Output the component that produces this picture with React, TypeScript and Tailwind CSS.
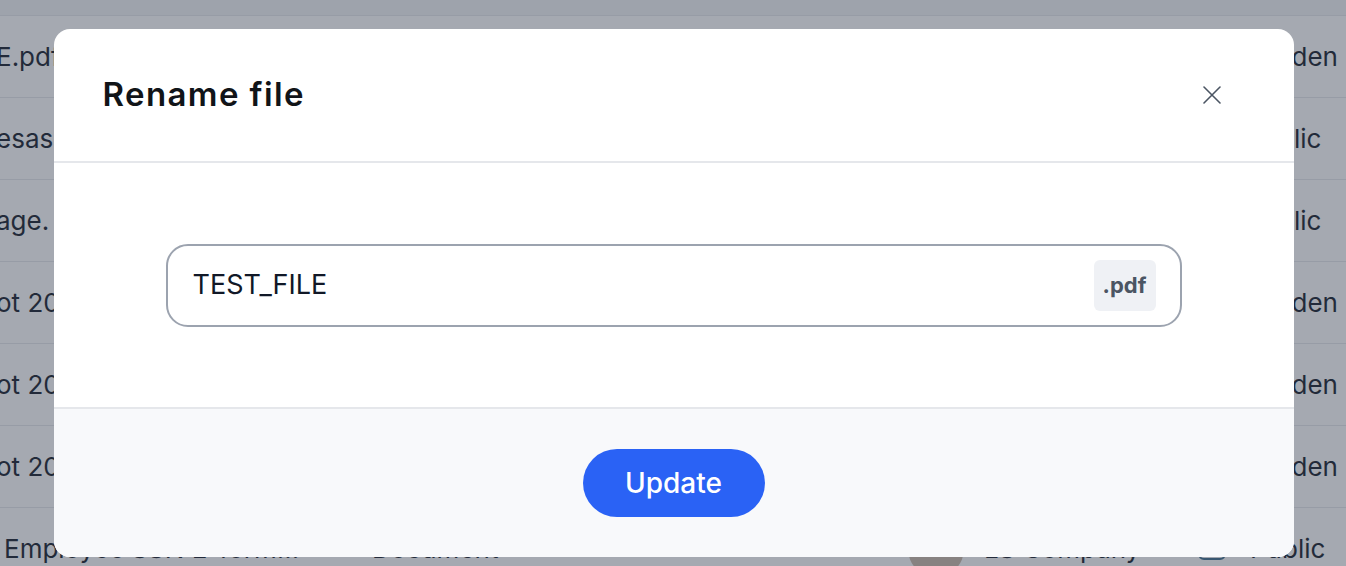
import React from "react";

const rows = [
  { name: "E.pdf", right: "Hidden", avatar: true },
  { name: "esasc", right: "Public" },
  { name: "age.", right: "Public" },
  { name: "ot 20", right: "Hidden" },
  { name: "ot 20", right: "Hidden" },
  { name: "ot 20", right: "Hidden" },
  { name: "Employee SSN E-form...", right: "Public", avatar: true, doc: "Document", company: "LS Company" },
];

export default function App() {
  return (
    <div
      className="relative h-[566px] w-[1346px] overflow-hidden bg-white"
      style={{ fontFamily: "Inter, 'Noto Sans', sans-serif" }}
    >
      {/* background table */}
      <div className="flex flex-col text-[26px] text-[#111827]">
        <div className="h-[16px] bg-gray-100 border-b border-gray-200" />
        {rows.map((r, i) => (
          <div key={i} className="flex h-[82px] items-center border-b border-gray-200">
            <div className={`w-[348px] shrink-0 whitespace-nowrap overflow-hidden ${i === 6 ? "pl-[4px]" : "-ml-[4px]"}`}>{r.name}</div>
            <div className="w-[560px] shrink-0 pl-[24px]">{r.doc ?? "Document"}</div>
            <div className="flex w-[280px] shrink-0 items-center gap-[20px]">
              <div className="h-[56px] w-[56px] rounded-full bg-[#c9b8a8]" />
              <span>{r.company ?? "LS Company"}</span>
            </div>
            <div className="flex items-center gap-[14px] pl-[10px]">
              <div className="h-[22px] w-[28px] rounded-[6px] border-2 border-[#3b6b8a]" />
              <span className={r.right === "Hidden" ? "pl-[14px]" : "pl-[10px]"}>{r.right}</span>
            </div>
          </div>
        ))}
      </div>

      {/* overlay */}
      <div className="absolute inset-0 bg-[#374151]/45" />

      {/* modal */}
      <div className="absolute inset-0 flex justify-center pl-[1px] pt-[29px]">
        <div className="flex h-[528px] w-[1240px] flex-col overflow-hidden rounded-[16px] bg-white">
          <div className="flex h-[134px] shrink-0 items-center justify-between border-b-2 border-[#e5e7eb] pl-[49px] pr-[73px]">
            <h2 className="text-[33px] font-semibold tracking-[1.4px] text-[#111418]">Rename file</h2>
            <svg width="18" height="18" viewBox="0 0 18 18" fill="none" stroke="#4b5563" strokeWidth="1.6" strokeLinecap="round">
              <path d="M1 1L17 17M17 1L1 17" />
            </svg>
          </div>
          <div className="flex h-[246px] shrink-0 items-center justify-center border-b-2 border-[#e5e7eb] px-[112px]">
            <div className="flex h-[83px] w-full items-center justify-between rounded-[22px] border-2 border-[#9ca3af] pl-[25px] pr-[24px]">
              <span className="text-[27px] text-[#111827]">TEST_FILE</span>
              <span className="flex h-[51px] w-[62px] items-center justify-center rounded-[6px] bg-[#eff1f5] text-[22px] font-bold text-[#4b5563]">
                .pdf
              </span>
            </div>
          </div>
          <div className="flex flex-1 items-start justify-center bg-[#f8f9fb] pt-[40px]">
            <button className="h-[68px] w-[182px] rounded-full bg-[#2a62f5] text-[28px] font-medium text-white">
              Update
            </button>
          </div>
        </div>
      </div>
    </div>
  );
}
